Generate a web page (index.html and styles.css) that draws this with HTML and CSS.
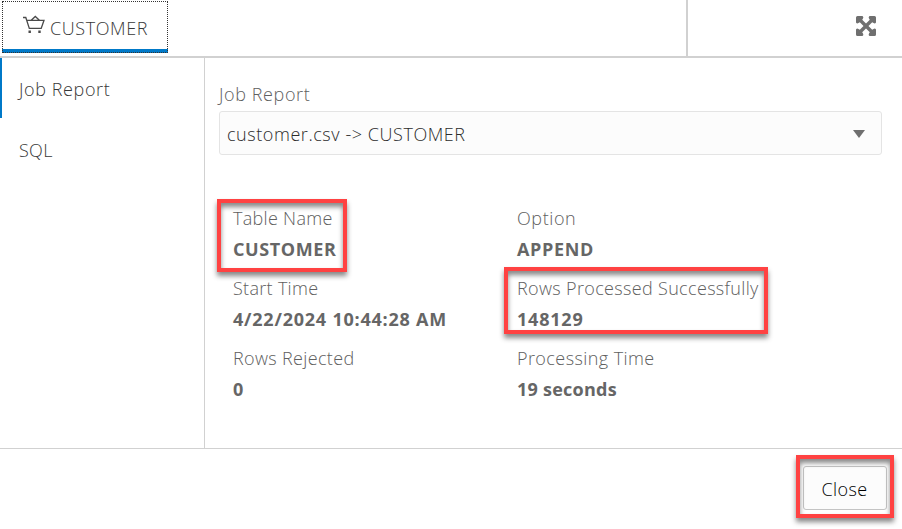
FILE: index.html
```
<!DOCTYPE html>
<html lang="en">
<head>
<meta charset="utf-8">
<title>Job Report</title>
<link rel="stylesheet" href="styles.css">
</head>
<body>
<div class="dialog">
  <header class="topbar">
    <div class="tab">
      <svg class="cart" width="22" height="19" viewBox="0 0 22 19" fill="none" stroke="#4a4a4a" stroke-width="1.3">
        <path d="M0 2.5H2.8L6.3 13.4H18.2L21 5.3H4M8.2 5.3L12.3 1.5L16.4 5.3"/>
        <path d="M5.5 15.6h2.4v2.4H5.5zM15.3 15.6h2.4v2.4h-2.4z" fill="#4a4a4a" stroke="none"/>
      </svg>
      <span class="tab-name">CUSTOMER</span>
    </div>
    <div class="tools">
      <svg width="20" height="20" viewBox="0 0 20 20" fill="#6f6f6f">
        <path d="M1.5 0H6.5Q8 1 7 2.5L6.2 3.8L10 7.5L13.8 3.8L13 2.5Q12 1 13.5 0H18.5Q20 0 20 1.5V6.5Q19 8 17.5 7L16.2 6.2L12.5 10L16.2 13.8L17.5 13Q19 12 20 13.5V18.5Q20 20 18.5 20H13.5Q12 19 13 17.5L13.8 16.2L10 12.5L6.2 16.2L7 17.5Q8 19 6.5 20H1.5Q0 20 0 18.5V13.5Q1 12 2.5 13L3.8 13.8L7.5 10L3.8 6.2L2.5 7Q1 8 0 6.5V1.5Q0 0 1.5 0Z"/>
      </svg>
    </div>
  </header>
  <div class="body">
    <nav class="side">
      <div class="item active"><span class="t-job">Job Report</span></div>
      <div class="item"><span class="t-sql">SQL</span></div>
    </nav>
    <main class="main">
      <div class="label t-job">Job Report</div>
      <div class="select"><span class="t-select">customer.csv -&gt; CUSTOMER</span>
        <svg class="arrow" width="12" height="8" viewBox="0 0 12 8" fill="#6f6f6f"><path d="M0 0H12L6 8Z"/></svg>
      </div>
      <dl class="grid">
        <div class="cell marked mark-table"><dt class="t-table">Table Name</dt><dd class="t-customer">CUSTOMER</dd></div>
        <div class="cell"><dt class="t-option">Option</dt><dd class="t-append">APPEND</dd></div>
        <div class="cell"><dt class="t-start">Start Time</dt><dd class="t-date">4/22/2024 10:44:28 AM</dd></div>
        <div class="cell marked mark-rows"><dt class="t-rows">Rows Processed Successfully</dt><dd class="t-count">148129</dd></div>
        <div class="cell"><dt class="t-rejected">Rows Rejected</dt><dd>0</dd></div>
        <div class="cell"><dt class="t-proc">Processing Time</dt><dd class="t-seconds">19 seconds</dd></div>
      </dl>
    </main>
  </div>
  <footer class="footer">
    <div class="marked mark-close"><button class="close">Close</button></div>
  </footer>
</div>
</body>
</html>
```
FILE: styles.css
```
*, *::after { box-sizing: border-box; }
body { margin: 0; background: #fff; font: 300 18px/30px "Open Sans", "Noto Sans", sans-serif; color: #383838; white-space: nowrap; }
svg { display: block; flex: none; }
.dialog { width: 902px; height: 529px; display: flex; flex-direction: column; overflow: hidden; }
.topbar { height: 58px; border-bottom: 2px solid #d1d1d1; display: flex; justify-content: space-between; }
.tab { width: 166px; height: 52px; margin: 1px 0 0 2px; padding: 13px 0 0 20px; display: flex; gap: 5px; border: 1px dotted #333; background: linear-gradient(#0079c8, #0079c8) bottom / 100% 4px no-repeat border-box; }
.tab-name { margin-top: -2px; letter-spacing: .58px; }
.t-job { letter-spacing: .6px; }
.t-sql { letter-spacing: .3px; }
.t-select { letter-spacing: .56px; padding-top: 2px; }
.t-table, .t-start { letter-spacing: .3px; }
.t-customer, .t-option { letter-spacing: .6px; }
.t-append { letter-spacing: .65px; }
.t-date { letter-spacing: .78px; }
.t-rows, .t-rejected { letter-spacing: .34px; }
.t-count { letter-spacing: .8px; }
.t-proc { letter-spacing: .42px; }
.t-seconds { letter-spacing: .25px; }
.tools { width: 216px; border-left: 2px solid #d1d1d1; display: flex; justify-content: flex-end; padding: 16px 26px 0 0; }
.body { height: 390px; display: flex; }
.side { width: 205px; border-right: 1px solid #d1d1d1; }
.item { height: 60px; padding: 16px 0 0 19px; margin-bottom: 1px; }
.active { border-left: 2px solid #0079c8; padding-left: 17px; }
.main { flex: 1; padding: 21px 20px 0 14px; }
.label { color: #606060; }
.select { height: 44px; margin-top: 2px; padding: 0 16px 0 7px; border: 1px solid #e4e4e4; border-radius: 3px; background: #fcfcfc; color: #2c2c2c; display: flex; align-items: center; justify-content: space-between; }
.arrow { margin-top: 2px; }
.grid { margin: 48px 0 0 14px; display: grid; grid-template-columns: 284px 1fr; grid-auto-rows: 70px; }
.cell { line-height: 31px; }
dt { color: #606060; }
dd { margin: 0; color: #666; font-weight: 700; }
.marked { position: relative; }
.marked::after { content: ""; position: absolute; border: 4px solid #ff4242; box-shadow: 0 4px 5px #0007, inset 0 4px 5px #0007; pointer-events: none; }
.mark-table::after { left: -16px; top: -4px; width: 130px; height: 73px; }
.mark-rows::after { left: -13px; top: -6px; width: 264px; height: 67px; }
.mark-close::after { left: -7px; top: -11px; width: 98px; height: 63px; }
.footer { flex: 1; border-top: 1px solid #d1d1d1; display: flex; justify-content: flex-end; padding: 17px 15px 0 0; }
.close { display: block; width: 84px; height: 44px; padding: 2px 0 0; border: 1px solid #c4c4c4; border-radius: 3px; background: #fcfcfc; color: #000; font: inherit; letter-spacing: .4px; text-indent: -1px; }
```
